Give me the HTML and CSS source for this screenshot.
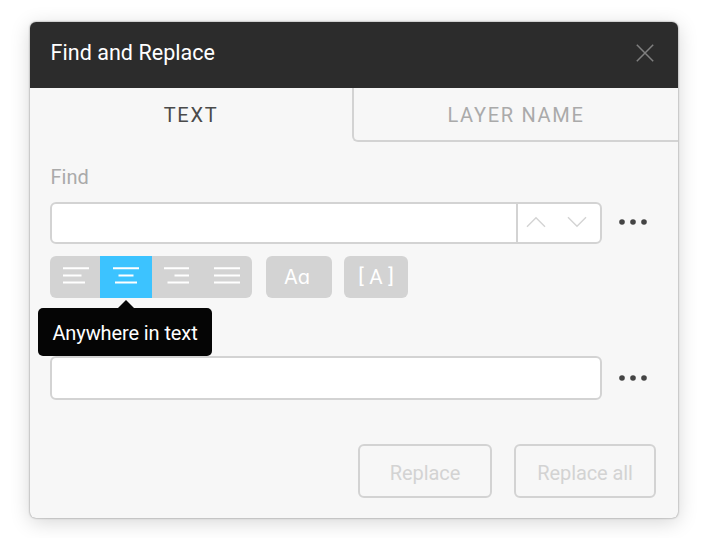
FILE: index.html
```html
<!DOCTYPE html>
<html lang="en">
<head>
<meta charset="utf-8">
<title>Find and Replace</title>
<link rel="stylesheet" href="styles.css">
</head>
<body>
<main class="dialog">
  <header class="header">
    <h1 class="title">Find and Replace</h1>
    <svg class="close" width="18" height="18" viewBox="0 0 18 18"><path d="M.8.8l16.4 16.4M17.2.8L.8 17.2"/></svg>
  </header>
  <nav class="tabs">
    <div class="tab active">TEXT</div>
    <div class="tab inactive">LAYER NAME</div>
  </nav>
  <section class="body">
    <div class="label">Find</div>
    <div class="row find-row">
      <div class="field find">
        <div class="input"></div>
        <div class="steps">
          <svg width="20" height="12" viewBox="0 0 20 12"><path d="M1 10.8l9-9 9 9"/></svg>
          <svg width="20" height="12" viewBox="0 0 20 12"><path d="M1 1.2l9 9 9-9"/></svg>
        </div>
      </div>
      <svg class="more" width="30" height="8" viewBox="0 0 30 8"><circle cx="4" cy="4" r="2.8"/><circle cx="15" cy="4" r="2.8"/><circle cx="26" cy="4" r="2.8"/></svg>
    </div>
    <div class="options">
      <div class="group">
        <div class="option"><svg width="26" height="18" viewBox="-1 0 26 18"><path d="M0 2.2h26M0 9.4h18.5M0 16.6h22"/></svg></div>
        <div class="option selected">
          <svg width="26" height="18" viewBox="0 0 26 18"><path d="M0 2.2h26M5.5 9.4h15M2 16.6h22"/></svg>
          <div class="tooltip">Anywhere in text</div>
        </div>
        <div class="option"><svg width="26" height="18" viewBox="1 0 26 18"><path d="M1 2.2h25M11.5 9.4h14.5M4.5 16.6h21.5"/></svg></div>
        <div class="option"><svg width="26" height="18" viewBox="0 0 26 18"><path d="M0 2.2h26M0 9.4h26M0 16.6h26"/></svg></div>
      </div>
      <div class="option match-case">Aa</div>
      <div class="option whole-word"><span class="bracket">[</span><span class="letter">A</span><span class="bracket">]</span></div>
    </div>
    <div class="row replace-row">
      <div class="field replace"></div>
      <svg class="more" width="30" height="8" viewBox="0 0 30 8"><circle cx="4" cy="4" r="2.8"/><circle cx="15" cy="4" r="2.8"/><circle cx="26" cy="4" r="2.8"/></svg>
    </div>
    <div class="actions">
      <button class="button">Replace</button>
      <button class="button all">Replace all</button>
    </div>
  </section>
</main>
</body>
</html>
```

FILE: styles.css
```css
* { box-sizing: border-box; }
body {
  margin: 0;
  padding: 22px 26px 20px 30px;
  background: #fff;
  font-family: Roboto, sans-serif;
}
svg { display: block; fill: none; flex: none; overflow: visible; }
.dialog {
  width: 648px;
  height: 496px;
  border-radius: 6px;
  background: #f7f7f7;
  box-shadow: 0 0 2px rgba(0, 0, 0, .5), 0 4px 20px rgba(0, 0, 0, .17);
}
.header {
  height: 66px;
  padding: 0 24.5px 5px 20.5px;
  display: flex;
  align-items: center;
  justify-content: space-between;
  background: #2c2c2c;
  border-radius: 6px 6px 0 0;
}
.title {
  margin: 0;
  color: #fff;
  font-size: 21.5px;
  font-weight: 400;
  letter-spacing: .05px;
}
.close { stroke: #808080; stroke-width: 1.5; }
.tabs { display: flex; height: 54px; }
.tab {
  display: flex;
  align-items: center;
  justify-content: center;
  font-size: 20px;
  letter-spacing: 1.7px;
}
.active { width: 322px; color: #4a4a4a; }
.inactive {
  flex: 1;
  padding-top: 2px;
  color: #aaa;
  border: solid #d3d3d3;
  border-width: 0 0 2px 2px;
  border-bottom-left-radius: 6px;
}
.body { padding: 23px 22px 0 20px; }
.label {
  height: 37px;
  padding-left: .5px;
  line-height: 24px;
  font-size: 20px;
  letter-spacing: 0;
  color: #aaa;
}
.row { display: flex; align-items: center; gap: 16px; }
.field {
  width: 552px;
  border: 2px solid #d3d3d3;
  border-radius: 6px;
  background: #fff;
}
.find { display: flex; height: 42px; }
.find-row .more { margin-bottom: 3px; }
.replace { height: 44px; }
.input { flex: 1; }
.steps {
  width: 84px;
  display: flex;
  align-items: center;
  gap: 21px;
  padding: 0 0 2px 8px;
  border-left: 2px solid #d3d3d3;
}
.steps svg { stroke: #d3d3d3; stroke-width: 1.4; }
.more { fill: #444; }
.options { display: flex; margin-top: 12px; }
.group { display: flex; }
.option {
  width: 50px;
  height: 42px;
  display: flex;
  align-items: center;
  justify-content: center;
  padding-bottom: 4px;
  background: #d3d3d3;
  color: #fff;
}
.option svg { stroke: #fff; stroke-width: 2; }
.group .option:first-child { border-radius: 6px 0 0 6px; }
.group .option:last-child { border-radius: 0 6px 6px 0; }
.group .selected { position: relative; width: 52px; background: #3cc3ff; }
.tooltip {
  position: absolute;
  z-index: 1;
  top: 52px;
  left: -62px;
  width: 174px;
  height: 48px;
  padding-top: 2px;
  border-radius: 5px;
  background: #050505;
  line-height: 46px;
  text-align: center;
  font-size: 20px;
  letter-spacing: -.1px;
  white-space: nowrap;
}
.tooltip::before {
  content: "";
  position: absolute;
  top: -8px;
  left: 80px;
  border: solid transparent;
  border-width: 0 8px 8px;
  border-bottom-color: #050505;
}
.match-case {
  width: 66px;
  margin-left: 14px;
  padding: 0 4px 1px 0;
  border-radius: 6px;
  font-family: Inter, sans-serif;
  font-size: 20px;
  font-feature-settings: "cv11";
}
.whole-word {
  width: 64px;
  margin-left: 12px;
  gap: 5.5px;
  padding-bottom: 1px;
  border-radius: 6px;
  font-size: 20px;
}
.bracket { font-size: 21px; padding-bottom: 2px; }
.letter { font-size: 20.5px; }
.replace-row { margin-top: 58px; }
.replace-row .more { margin-bottom: 1px; }
.actions { display: flex; justify-content: flex-end; gap: 22px; margin-top: 44px; }
.button {
  width: 134px;
  height: 54px;
  padding: 4px 0 0;
  border: 2px solid #d3d3d3;
  border-radius: 6px;
  background: transparent;
  color: #d3d3d3;
  font: 20px Roboto, sans-serif;
  letter-spacing: -.1px;
}
.all { width: 142px; }
```
